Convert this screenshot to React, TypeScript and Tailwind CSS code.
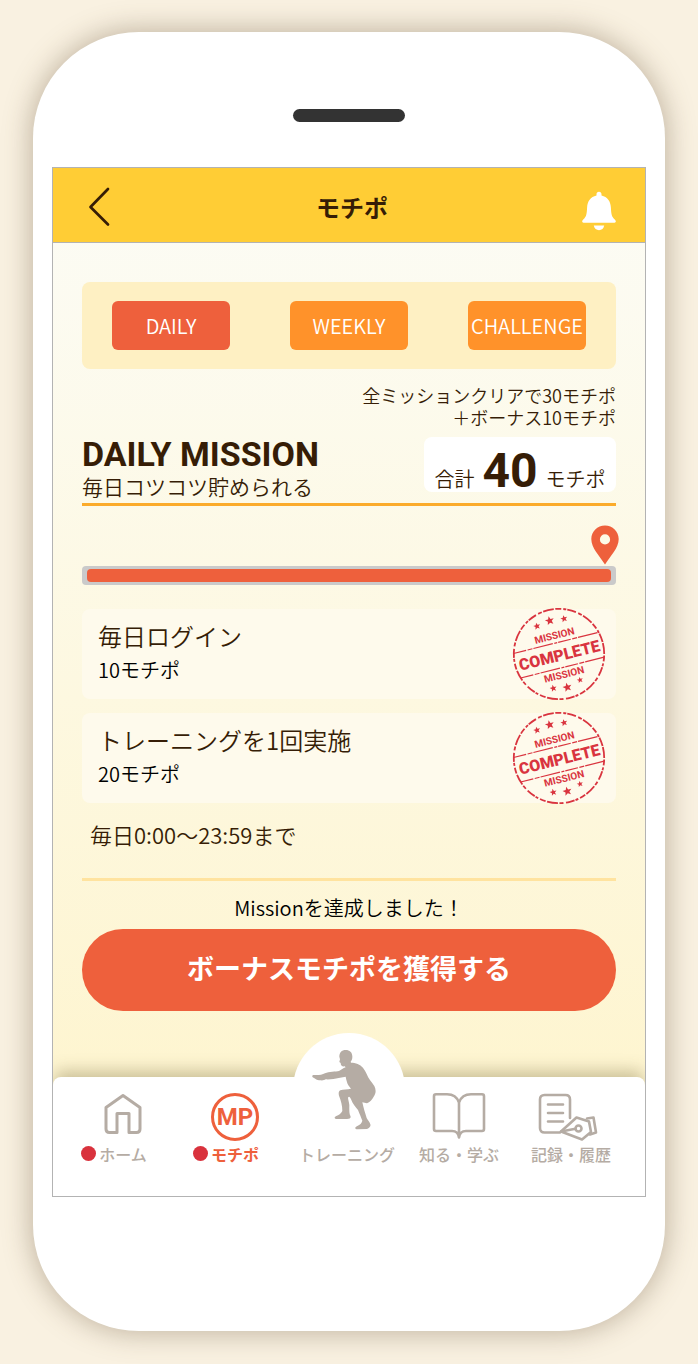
import type { ReactNode } from "react";

const STAR =
  "M0 -4.2 L1.1 -1.4 L4.1 -1.3 L1.8 0.6 L2.6 3.5 L0 1.9 L-2.6 3.5 L-1.8 0.6 L-4.1 -1.3 L-1.1 -1.4 Z";

function BackIcon() {
  return (
    <svg className="h-10 w-6" viewBox="0 0 24 40" fill="none" stroke="#361d06" strokeWidth="2.7" strokeLinecap="round" strokeLinejoin="round">
      <path d="M21 2 L3.500 20 L21 37.500" />
    </svg>
  );
}

function BellIcon() {
  return (
    <svg className="h-10 w-9" viewBox="0 0 36 40" fill="#fff">
      <path d="M18 0.800c-1.500 0-2.600 1.200-2.500 2.600v1.200C9.500 6 6.400 10.500 6.100 16.500c-0.300 6-0.700 8.500-2.600 10.700C2 28.500 1.200 29.500 1.200 30.600c0 0.700 0.500 1.200 1.300 1.200h31c0.800 0 1.300-0.500 1.300-1.200 0-1.100-0.800-2.100-2.300-3.400-1.900-2.200-2.300-4.700-2.600-10.700C29.600 10.500 26.500 6 20.500 4.600V3.400C20.600 2 19.500 0.800 18 0.800Z" />
      <path d="M12.800 34.500h10.400c-0.500 2.800-2.500 4.700-5.200 4.700s-4.700-1.900-5.200-4.700Z" />
    </svg>
  );
}

function PinIcon() {
  return (
    <svg className="h-10 w-7" viewBox="0 0 28 40" fill="#ee603c">
      <path fillRule="evenodd" d="M14 0.500C6.400 0.500 0.300 6.400 0.300 14c0 9 8 16.500 13.700 25.500C19.700 30.500 27.700 23 27.700 14 27.700 6.400 21.600 0.500 14 0.500Zm0 8.800a5.100 5.100 0 1 1 0 10.200 5.100 5.100 0 0 1 0-10.200Z" />
    </svg>
  );
}

function CompleteStamp() {
  const stars = [
    [-14.7, -32.3, 0.85],
    [-1, -34.6, 1.1],
    [13.4, -33, 0.85],
    [-13.8, 31.9, 0.85],
    [0, 34.3, 1.1],
    [14.1, 30.3, 0.75],
  ];
  return (
    <svg className="-my-1 size-[94px] shrink-0" viewBox="-47 -47 94 94" role="img" aria-label="MISSION COMPLETE" fill="#d9343f">
      <g transform="rotate(-14)" fontFamily="Roboto, sans-serif" fontWeight="700" textAnchor="middle">
        <circle r="45.200" fill="none" stroke="#d9343f" strokeWidth="1.800" strokeDasharray="11 1.500 6 2 3 1 9 2.500 4 1.500" />
        <path d="M-44 -11.500H44M-43 14H43" stroke="#d9343f" strokeWidth="1.200" strokeDasharray="13 1.500 5 1 20 1.500 3 1" />
        <text y="-15.500" fontSize="10">MISSION</text>
        <text y="7" fontSize="16" fontWeight="900">COMPLETE</text>
        <text y="24.500" fontSize="10">MISSION</text>
        {stars.map(([x, y, s]) => (
          <path key={`${x}`} d={STAR} transform={`translate(${x} ${y}) scale(${s})`} />
        ))}
      </g>
    </svg>
  );
}

function HomeIcon() {
  return (
    <svg className="h-[42px] w-10" viewBox="0 0 40 42" fill="none" stroke="#b5aca4" strokeWidth="3" strokeLinejoin="round">
      <path d="M3 14.500 L20 2.500 L37 14.500 V36 Q37 39.500 33.500 39.500 H26 V20.500 H14 V39.500 H6.500 Q3 39.500 3 36 Z" />
    </svg>
  );
}

function PointsIcon() {
  return (
    <span className="flex size-12 items-center justify-center rounded-full border-3 border-[#ee603c] font-[Roboto] text-2xl font-bold text-[#ee603c]">
      MP
    </span>
  );
}

function SquatIcon() {
  return (
    <svg className="h-20 w-16" viewBox="67 60 192 240" fill="#b5aca4">
      <path d="M168 60C156 60 149 68 149 80L151 88L149 96L153 99C153 107 157 110 165 109L168 112C160 115 155 120 148 123C138 125 118 125 106 130C97 135 84 136 72 135C67 135 67 140 69 142C77 146 80 151 92 151C100 152 104 150 108 148C122 149 136 146 147 144L168 140C170 150 172 158 176 166L184 176C174 178 160 178 152 181C147 184 146 190 148 197C154 212 158 226 158 243C154 251 147 256 140 258C134 261 133 265 139 267H172C181 266 185 264 182 257C178 250 179 236 179 225C178 215 175 207 175 203C178 198 181 201 184 208C189 222 198 232 205 240C210 252 214 262 218 272C216 280 211 284 203 288C195 291 194 297 204 298L232 297C240 294 244 288 242 283C240 275 234 270 231 264C226 248 222 236 218 217L232 220C240 217 248 208 252 200C260 190 259 178 254 168C246 156 236 146 231 132C225 118 216 107 204 102C198 99 190 98 184 98L183 95C188 90 188 84 188 79C188 67 180 60 168 60Z" />
    </svg>
  );
}

function BookIcon() {
  return (
    <svg className="h-12 w-[54px]" viewBox="0 0 54 48" fill="none" stroke="#b5aca4" strokeWidth="2.600" strokeLinejoin="round" strokeLinecap="round">
      <path d="M27 9.500C25 4 20 1.300 15 1.300H4Q2 1.300 2 3.300V36Q2 38 4 38H20C24 38 26.500 40.500 27 44.500C27.500 40.500 30 38 34 38H50Q52 38 52 36V3.300Q52 1.300 50 1.300H39C34 1.300 29 4 27 9.500V43" />
    </svg>
  );
}

function RecordIcon() {
  return (
    <svg className="h-12 w-[60px]" viewBox="0 0 60 48" fill="none" stroke="#b5aca4" strokeWidth="2.600" strokeLinejoin="round" strokeLinecap="round">
      <path d="M22 39.500H6.500Q2 39.500 2 35V6.500Q2 2 6.500 2H27.500Q32 2 32 6.500V25" />
      <path d="M10 11.500H25M10 20H25M10 28.500H25" />
      <path d="M23 38.500L38.500 24.500L51 28.500L53 39L44 46.500Z" />
      <path d="M23 38.500L37.500 35.800" />
      <circle cx="40.500" cy="35.500" r="3" />
      <path d="M49 25.500L55.500 24.500L58 39.500L52 41.500" />
    </svg>
  );
}

function Tab({ label, active = false }: { label: string; active?: boolean }) {
  return (
    <button
      type="button"
      aria-pressed={active}
      className={`h-[49px] w-[118px] rounded-md text-center text-xl font-[350] text-white ${active ? "bg-[#ee603c]" : "bg-[#ff922a]"}`}
    >
      {label}
    </button>
  );
}

function Mission({ title, points }: { title: string; points: string }) {
  return (
    <li className="flex h-[90px] items-center justify-between rounded-lg bg-[#fefaec] pr-2.5 pl-4">
      <div className="pb-1">
        <h3 className="text-2xl leading-[36px] font-[350]">{title}</h3>
        <p className="text-xl leading-[32px] font-[350] text-black">{points}</p>
      </div>
      <CompleteStamp />
    </li>
  );
}

function NavItem({ icon, label, active = false, dot = false }: { icon: ReactNode; label: string; active?: boolean; dot?: boolean }) {
  return (
    <a href="#" className={`flex flex-col items-center ${active ? "font-bold text-[#ee603c]" : "font-medium text-[#b5aca4]"}`}>
      <span className="flex h-[65px] items-start justify-center pt-4">{icon}</span>
      <span className="relative text-base leading-6 whitespace-nowrap">
        {dot && <span className="absolute top-1 -left-[18px] size-[15px] rounded-full bg-[#d9323d]" />}
        {label}
      </span>
    </a>
  );
}

export default function App() {
  return (
    <div className="bg-[#f9f1e1] px-[33px] pt-8 pb-[34px] font-['Noto_Sans_CJK_JP',sans-serif] text-[#361d06]">
      <div className="rounded-[106px] bg-white px-[19px] pt-[77px] pb-[134px] shadow-[0_0_28px_2px_rgba(105,85,60,0.4)]">
        <div className="mx-auto h-[13px] w-28 rounded-full bg-[#333333]" />
        <main className="mt-[45px] overflow-hidden border border-[#b3b3b3] bg-linear-to-b from-[#fcfcf6] to-[#fef4cb]">
          <header className="flex h-[75px] items-center justify-between border-b border-[#b3b3b3] bg-[#ffcd35] pt-1 pr-7 pl-[34px]">
            <button type="button" aria-label="戻る" className="w-9">
              <BackIcon />
            </button>
            <h1 className="text-2xl font-bold">モチポ</h1>
            <button type="button" aria-label="お知らせ" className="pt-2">
              <BellIcon />
            </button>
          </header>

          <div className="px-[29px] pt-[39px]">
            <div className="flex h-[87px] items-center justify-between rounded-lg bg-[#fef0c3] px-[30px]">
              <Tab label="DAILY" active />
              <Tab label="WEEKLY" />
              <Tab label="CHALLENGE" />
            </div>

            <p className="mt-[15px] text-right text-lg leading-[22px] font-[350]">
              全ミッションクリアで30モチポ
              <br />
              ＋ボーナス10モチポ
            </p>

            <section className="mt-[9px] flex items-start justify-between border-b-3 border-[#fbab2b] pb-[2px]">
              <div>
                <h2 className="font-[Roboto] text-[34px] leading-[34px] font-bold">DAILY MISSION</h2>
                <p className="text-[21px] leading-[30px] font-[350]">毎日コツコツ貯められる</p>
              </div>
              <p className="flex h-[55px] w-48 items-baseline justify-center gap-2 rounded-lg bg-white text-xl leading-[68px] font-[350] whitespace-nowrap">
                合計
                <strong className="font-[Roboto] text-5xl leading-[68px] font-bold">40</strong>
                モチポ
              </p>
            </section>

            <div className="-mr-[3px] mt-[19px] flex justify-end">
              <PinIcon />
            </div>
            <div role="progressbar" aria-label="ミッション達成率" aria-valuenow={100} className="mt-px rounded-sm bg-[#cacaca] px-[5px] py-[3px]">
              <div className="h-[13px] rounded-sm bg-[#ee603c]" />
            </div>

            <ul className="mt-6 flex flex-col gap-3.5">
              <Mission title="毎日ログイン" points="10モチポ" />
              <Mission title="トレーニングを1回実施" points="20モチポ" />
            </ul>
            <p className="mt-3.5 pl-2 text-[22px] leading-[34px] font-[350]">毎日0:00〜23:59まで</p>

            <div className="mt-[27px] border-t-3 border-[#ffe39f] pt-[11px] text-center">
              <p className="text-xl leading-8 font-[350] text-black">Missionを達成しました！</p>
              <button type="button" className="mt-[5px] h-[82px] w-full rounded-full bg-[#ee603c] pb-1 text-[27px] font-bold text-white">
                ボーナスモチポを獲得する
              </button>
            </div>
          </div>

          <nav className="relative mt-[66px] h-[119px] rounded-t-lg bg-white shadow-[0_-8px_16px_-2px_rgba(110,95,50,0.35)]">
            <div className="absolute -top-11 left-1/2 size-28 -translate-x-1/2 rounded-full bg-white" />
            <div className="relative grid grid-cols-5 pr-[18px] pl-3.5">
              <NavItem icon={<HomeIcon />} label="ホーム" dot />
              <NavItem icon={<PointsIcon />} label="モチポ" active dot />
              <NavItem icon={<span className="-mt-[43px] pr-1.5"><SquatIcon /></span>} label="トレーニング" />
              <NavItem icon={<BookIcon />} label="知る・学ぶ" />
              <NavItem icon={<span className="pr-1.5"><RecordIcon /></span>} label="記録・履歴" />
            </div>
          </nav>
        </main>
      </div>
    </div>
  );
}
